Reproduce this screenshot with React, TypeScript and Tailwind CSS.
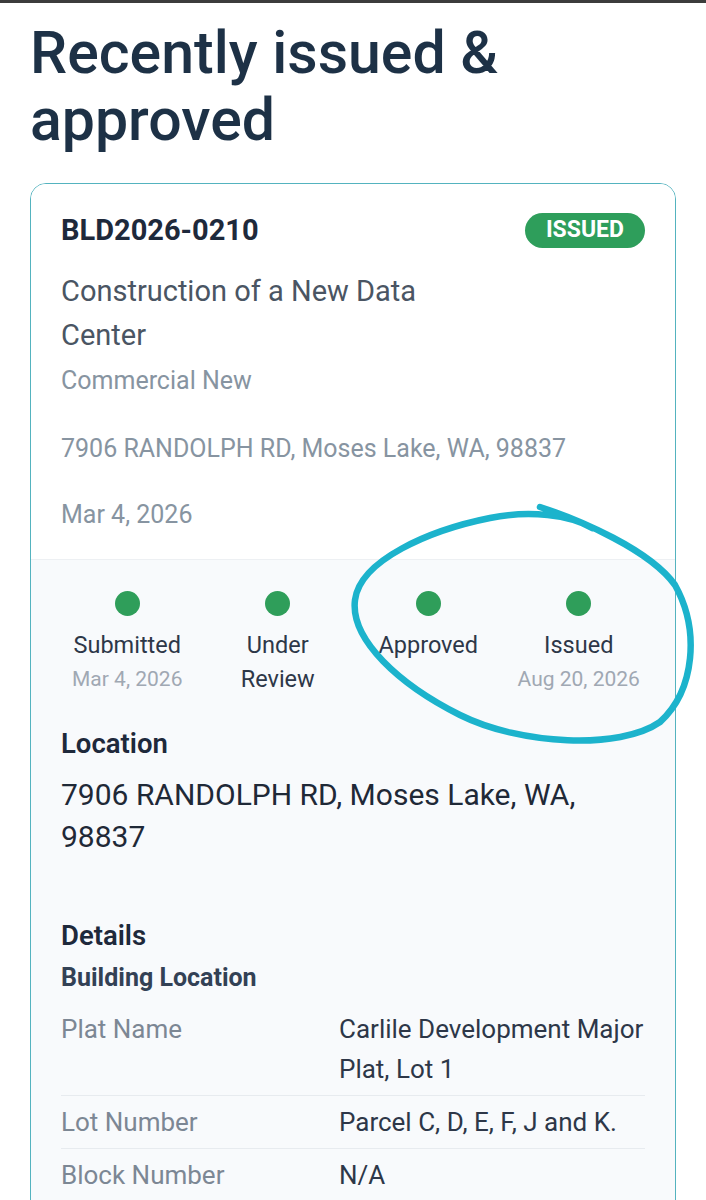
import React from 'react';

const steps = [
  { label: 'Submitted', date: 'Mar 4, 2026' },
  { label: 'Under Review', date: '' },
  { label: 'Approved', date: '' },
  { label: 'Issued', date: 'Aug 20, 2026' },
];

const rows = [
  { label: 'Plat Name', value: 'Carlile Development Major Plat, Lot 1' },
  { label: 'Lot Number', value: 'Parcel C, D, E, F, J and K.' },
  { label: 'Block Number', value: 'N/A' },
];

export default function App() {
  return (
    <div className="relative w-[706px] h-[1200px] overflow-hidden bg-white font-['Roboto',sans-serif]">
      <div className="h-[3px] bg-[#3c3c3c]" />

      {/* Heading */}
      <h1 className="px-[30px] pt-[16px] text-[59px] leading-[67px] font-medium text-[#1d3146]">
        Recently issued &amp; approved
      </h1>

      {/* Permit card */}
      <div className="mx-[30px] mt-[30px] border border-[#54b3bf] rounded-[16px] overflow-hidden">
        <div className="px-[30px] pt-[28px] pb-[29px] bg-white">
          <div className="flex items-center justify-between">
            <span className="text-[29px] leading-[36px] font-bold text-[#1e293b]">BLD2026-0210</span>
            <span className="h-[35px] px-[21px] flex items-center rounded-full bg-[#2e9e5b] text-white text-[23px] font-bold">
              ISSUED
            </span>
          </div>
          <p className="mt-[21px] w-[400px] text-[29px] leading-[44px] text-[#4a5563]">
            Construction of a New Data Center
          </p>
          <p className="mt-[9px] text-[25px] leading-[30px] text-[#8794a1]">Commercial New</p>
          <p className="mt-[38px] text-[25px] leading-[30px] text-[#8794a1]">
            7906 RANDOLPH RD, Moses Lake, WA, 98837
          </p>
          <p className="mt-[36px] text-[25px] leading-[30px] text-[#8794a1]">Mar 4, 2026</p>
        </div>

        <div className="bg-[#f8fafc] border-t border-[#edf0f3] pt-[31px] pb-[40px]">
          {/* Status timeline */}
          <div className="grid grid-cols-4 px-[21px]">
            {steps.map((s) => (
              <div key={s.label} className="flex flex-col items-center text-center">
                <div className="w-[25px] h-[25px] rounded-full bg-[#2f9e5a]" />
                <span className="mt-[12px] w-[120px] text-[23.5px] leading-[34px] text-[#2d3748]">{s.label}</span>
                {s.date && <span className="text-[21px] leading-[34px] text-[#a0a8b3]">{s.date}</span>}
              </div>
            ))}
          </div>

          <div className="px-[30px]">
            <h3 className="mt-[32px] text-[27.5px] leading-[32px] font-semibold text-[#1e293b]">Location</h3>
            <p className="mt-[14px] w-[560px] text-[30px] leading-[42px] text-[#1f2937]">
              7906 RANDOLPH RD, Moses Lake, WA, 98837
            </p>

            <h3 className="mt-[62px] text-[27.5px] leading-[32px] font-semibold text-[#1e293b]">Details</h3>
            <h4 className="mt-[11px] text-[25px] leading-[30px] font-bold text-[#334155]">Building Location</h4>

            <div className="mt-[10px]">
              {rows.map((r, i) => (
                <div
                  key={r.label}
                  className={`flex py-[6px] ${i < rows.length - 1 ? 'border-b border-[#e7ebef]' : ''}`}
                >
                  <span className="w-[278px] shrink-0 text-[26px] leading-[40px] text-[#7c8794]">{r.label}</span>
                  <span className="flex-1 text-[26px] leading-[40px] text-[#2d3748]">{r.value}</span>
                </div>
              ))}
            </div>
          </div>
        </div>
      </div>

      {/* Hand-drawn highlight */}
      <svg className="absolute left-0 top-0 pointer-events-none" width="706" height="1200" viewBox="0 0 706 1200">
        <path
          d="M540,507 C580,520 650,550 675,585 C700,630 695,690 660,722 C620,750 520,745 460,715 C400,685 350,640 355,600 C360,560 430,530 490,518 C530,510 570,515 592,528"
          fill="none"
          stroke="#1cb3cc"
          strokeWidth="6.5"
          strokeLinecap="round"
          strokeLinejoin="round"
        />
      </svg>
    </div>
  );
}
